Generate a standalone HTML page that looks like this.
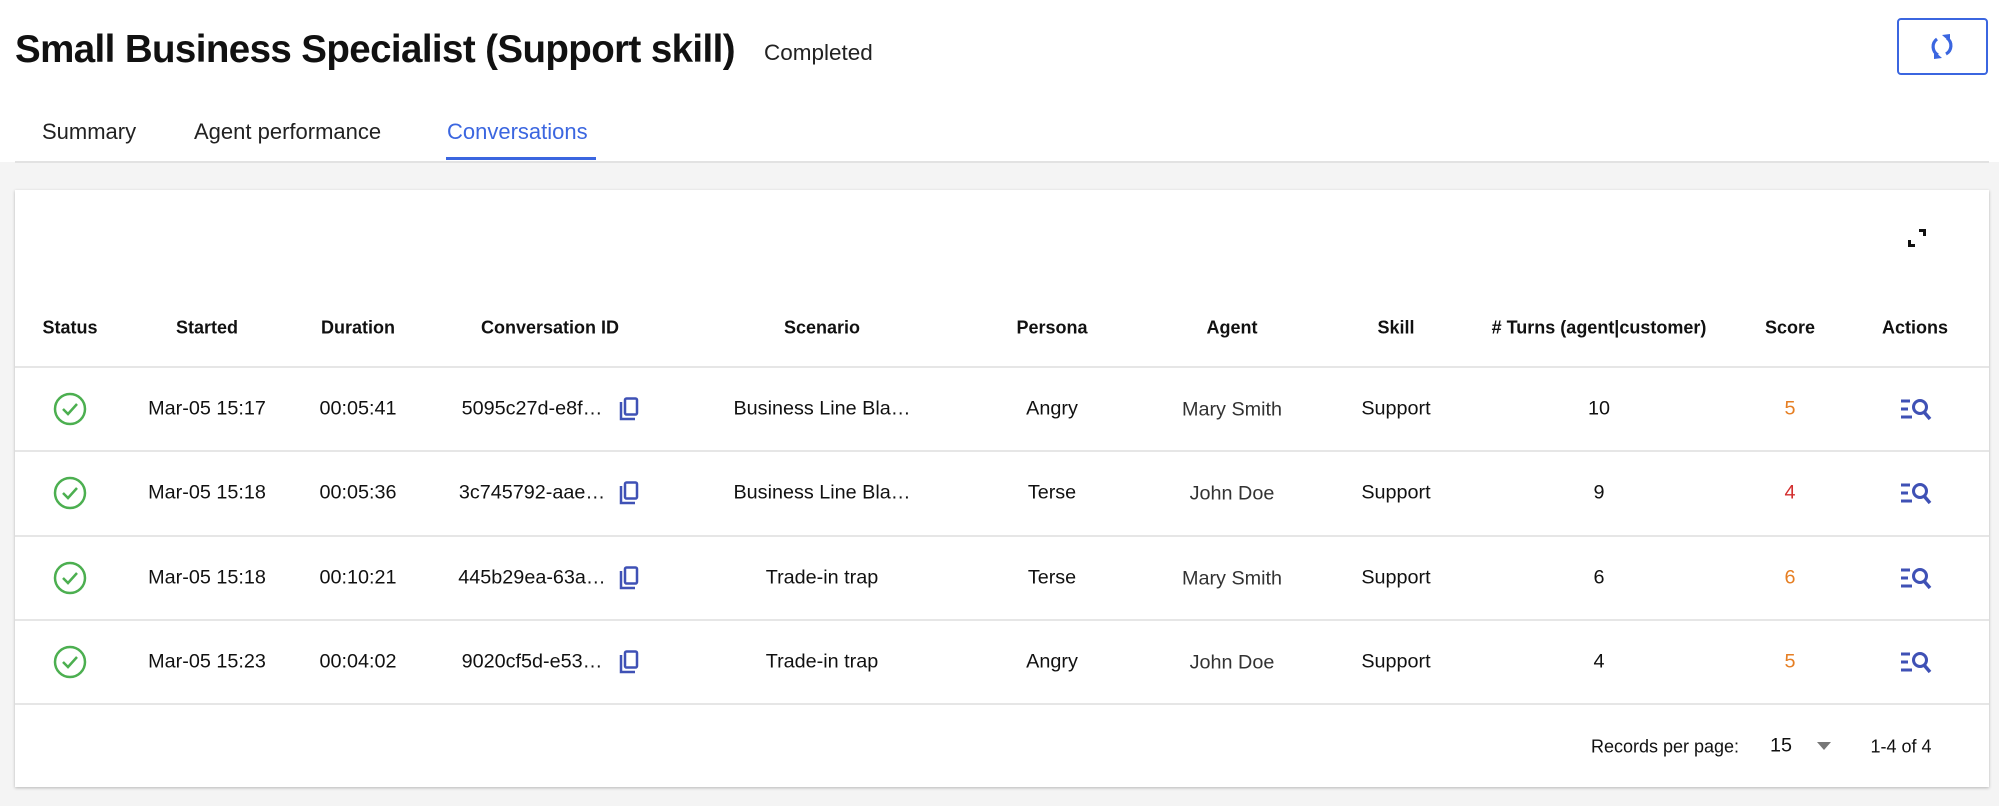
<!DOCTYPE html>
<html><head><meta charset="utf-8"><style>
*{margin:0;padding:0;box-sizing:border-box}
body{width:1999px;height:806px;background:#f4f4f4;font-family:"Liberation Sans",Arial,sans-serif;color:#111;position:relative;overflow:hidden}
.top{position:absolute;left:0;top:0;width:1999px;height:162px;background:#fff}
.title{position:absolute;left:15px;top:28px;font-size:38.5px;font-weight:bold;letter-spacing:-0.6px;white-space:nowrap}
.status{position:absolute;left:764px;top:40px;font-size:22.5px;color:#222}
.refresh{position:absolute;left:1897px;top:18px;width:91px;height:57px;border:2px solid #3b66e0;border-radius:4px;background:#fff}
.tabs{position:absolute;left:15px;top:0;width:1974px;height:163px;border-bottom:2px solid #e2e2e2}
.tab{position:absolute;top:119px;font-size:22px;color:#222}
.tab.active{color:#3b66e0}
.underline{position:absolute;left:446px;top:157px;width:150px;height:3px;background:#3b66e0}
.card{position:absolute;left:15px;top:190px;width:1974px;height:597px;background:#fff;box-shadow:0 1px 3px rgba(0,0,0,.25)}
.c{position:absolute;transform:translate(-50%,-50%);font-size:19.8px;white-space:nowrap}
.h{font-weight:bold;font-size:18px}
.line{position:absolute;left:0;width:1974px;height:2px;background:#e6e6e6}
</style></head><body>
<div class="top"></div>
<div class="tabs"></div>
<div class="title">Small Business Specialist (Support skill)</div>
<div class="status">Completed</div>
<div class="refresh"><svg width="91" height="57" viewBox="0 0 91 57" style="position:absolute;left:-2px;top:-2px"><g fill="none" stroke="#3b66e0" stroke-width="3.2"><path d="M40 21 A9.5 9.5 0 0 0 41 37"/><path d="M50 20 A9.5 9.5 0 0 1 49 36"/></g><path d="M37 33 L45 40 L37 41Z M53 24 L45 17 L53 16Z" fill="#3b66e0"/></svg></div>
<div class="tab" style="left:42px">Summary</div>
<div class="tab" style="left:194px">Agent performance</div>
<div class="tab active" style="left:447px">Conversations</div>
<div class="underline"></div>
<div class="card">
<svg style="position:absolute;left:1890px;top:36px" width="24" height="24" viewBox="0 0 24 24"><path d="M3 14v7h7v-3H6v-4zM21 10V3h-7v3h4v4z" fill="#111"/></svg>
<div class="line" style="top:176px"></div>
<div class="line" style="top:260px"></div>
<div class="line" style="top:345px"></div>
<div class="line" style="top:429px"></div>
<div class="line" style="top:513px"></div>
<div class="c h" style="left:55px;top:138px">Status</div>
<div class="c h" style="left:192px;top:138px">Started</div>
<div class="c h" style="left:343px;top:138px">Duration</div>
<div class="c h" style="left:535px;top:138px">Conversation ID</div>
<div class="c h" style="left:807px;top:138px">Scenario</div>
<div class="c h" style="left:1037px;top:138px">Persona</div>
<div class="c h" style="left:1217px;top:138px">Agent</div>
<div class="c h" style="left:1381px;top:138px">Skill</div>
<div class="c h" style="left:1584px;top:138px"># Turns (agent|customer)</div>
<div class="c h" style="left:1775px;top:138px">Score</div>
<div class="c h" style="left:1900px;top:138px">Actions</div>

<div id="rows"></div>
<div class="c" style="left:1650px;top:557px;font-size:18px">Records per page:</div>
<div class="c" style="left:1766px;top:556px">15</div>
<svg style="position:absolute;left:1802px;top:552px" width="14" height="8"><path d="M0 0h14L7 8z" fill="#777"/></svg>
<div class="c" style="left:1886px;top:557px;font-size:18px">1-4 of 4</div>
</div>
<script>
var rows=[["Mar-05 15:17","00:05:41","5095c27d-e8f…","Business Line Bla…","Angry","Mary Smith","10","5","#e67e22"],
["Mar-05 15:18","00:05:36","3c745792-aae…","Business Line Bla…","Terse","John Doe","9","4","#d32f2f"],
["Mar-05 15:18","00:10:21","445b29ea-63a…","Trade-in trap","Terse","Mary Smith","6","6","#e67e22"],
["Mar-05 15:23","00:04:02","9020cf5d-e53…","Trade-in trap","Angry","John Doe","4","5","#e67e22"]];
var h="",ys=[219,303,388,472];
rows.forEach(function(r,i){var y=ys[i];
h+='<svg style="position:absolute;left:38px;top:'+(y-17)+'px" width="34" height="34" viewBox="0 0 34 34"><circle cx="17" cy="17" r="15" fill="none" stroke="#4caf50" stroke-width="2.5"/><path d="M10 17l5 5 9-10" fill="none" stroke="#4caf50" stroke-width="2.5"/></svg>';
h+='<div class="c" style="left:192px;top:'+y+'px">'+r[0]+'</div>';
h+='<div class="c" style="left:343px;top:'+y+'px">'+r[1]+'</div>';
h+='<div class="c" style="left:517px;top:'+y+'px">'+r[2]+'</div>';
h+='<svg style="position:absolute;left:603px;top:'+(y-12)+'px" width="22" height="24" viewBox="0 0 22 24"><path d="M3 5v17h14" fill="none" stroke="#3f51b5" stroke-width="2.5"/><rect x="7" y="1.5" width="12" height="16" rx="1.5" fill="none" stroke="#3f51b5" stroke-width="2.5"/></svg>';
h+='<div class="c" style="left:807px;top:'+y+'px">'+r[3]+'</div>';
h+='<div class="c" style="left:1037px;top:'+y+'px">'+r[4]+'</div>';
h+='<div class="c" style="left:1217px;top:'+(y+1)+'px;color:#333">'+r[5]+'</div>';
h+='<div class="c" style="left:1381px;top:'+y+'px">Support</div>';
h+='<div class="c" style="left:1584px;top:'+y+'px">'+r[6]+'</div>';
h+='<div class="c" style="left:1775px;top:'+y+'px;color:'+r[8]+'">'+r[7]+'</div>';
h+='<svg style="position:absolute;left:1884px;top:'+(y-12)+'px" width="34" height="24" viewBox="0 0 34 24"><path d="M2 4h9M2 12h7M2 20h11" stroke="#3f51b5" stroke-width="3"/><circle cx="21" cy="10" r="6.5" fill="none" stroke="#3f51b5" stroke-width="3"/><path d="M25 15l6 7" stroke="#3f51b5" stroke-width="3.5"/></svg>';
});
document.getElementById('rows').innerHTML=h;
</script>
</body></html>
